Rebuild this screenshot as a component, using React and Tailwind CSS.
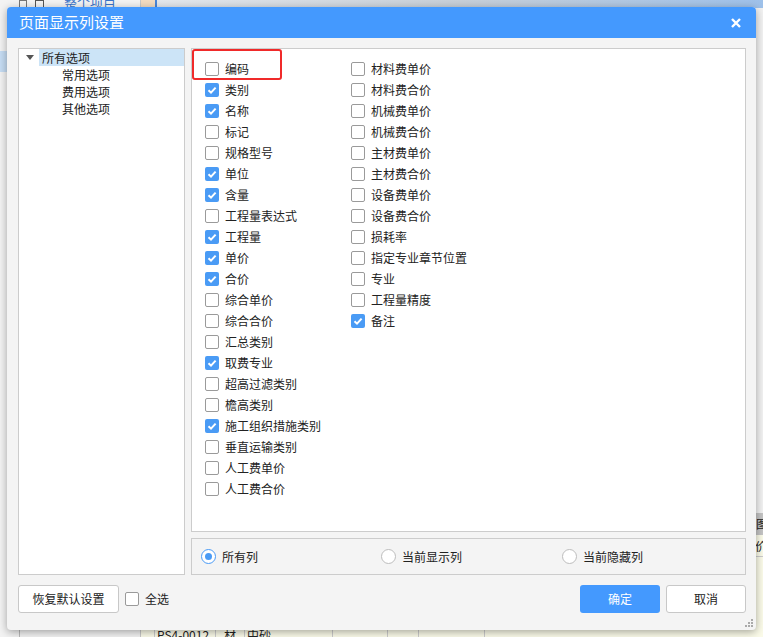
import React from "react";

const col1 = [
  ["编码", false],
  ["类别", true],
  ["名称", true],
  ["标记", false],
  ["规格型号", false],
  ["单位", true],
  ["含量", true],
  ["工程量表达式", false],
  ["工程量", true],
  ["单价", true],
  ["合价", true],
  ["综合单价", false],
  ["综合合价", false],
  ["汇总类别", false],
  ["取费专业", true],
  ["超高过滤类别", false],
  ["檐高类别", false],
  ["施工组织措施类别", true],
  ["垂直运输类别", false],
  ["人工费单价", false],
  ["人工费合价", false],
];

const col2 = [
  ["材料费单价", false],
  ["材料费合价", false],
  ["机械费单价", false],
  ["机械费合价", false],
  ["主材费单价", false],
  ["主材费合价", false],
  ["设备费单价", false],
  ["设备费合价", false],
  ["损耗率", false],
  ["指定专业章节位置", false],
  ["专业", false],
  ["工程量精度", false],
  ["备注", true],
];

function Box({ checked }) {
  if (checked) {
    return (
      <span className="flex h-[14px] w-[14px] shrink-0 items-center justify-center rounded-[2px] bg-[#4a9bf5]">
        <svg width="10" height="10" viewBox="0 0 10 10">
          <path d="M1.5 5.2 L4 7.6 L8.6 2.6" fill="none" stroke="#fff" strokeWidth="2" />
        </svg>
      </span>
    );
  }
  return <span className="h-[14px] w-[14px] shrink-0 rounded-[2px] border border-[#9a9a9a] bg-white" />;
}

function Item({ label, checked }) {
  return (
    <div className="flex h-[21px] items-center gap-[6px]">
      <Box checked={checked} />
      <span className="whitespace-nowrap">{label}</span>
    </div>
  );
}

function Radio({ on, label }) {
  return (
    <div className="flex items-center gap-[6px]">
      {on ? (
        <span className="flex h-[15px] w-[15px] items-center justify-center rounded-full border border-[#4a9bf5] bg-white">
          <span className="h-[7px] w-[7px] rounded-full bg-[#4a9bf5]" />
        </span>
      ) : (
        <span className="h-[15px] w-[15px] rounded-full border border-[#bdbdbd] bg-white" />
      )}
      <span>{label}</span>
    </div>
  );
}

export default function App() {
  return (
    <div
      className="relative h-[637px] w-[763px] overflow-hidden bg-[#f2f2f2] text-[12px] text-[#222]"
      style={{ fontFamily: '"Noto Sans CJK SC", "Noto Sans", sans-serif' }}
    >
      {/* background application */}
      <div className="flex h-full">
        <div className="flex w-[141px] flex-col border-r border-[#c9c9c9] bg-[#f3f3f3]">
          <div className="flex h-[8px] items-end pl-[19px] text-[13px] leading-none text-[#3a73c9]">
            <span className="h-[8px] w-[8px] border border-[#777]" />
            <span className="ml-[8px] h-[8px] w-[9px] border border-[#555]" />
            <span className="ml-[20px]">整个项目</span>
          </div>
          <div className="mt-[43px] h-[21px] w-[10px] bg-[#c6ddf4]" />
          <div className="flex-1" />
          <div className="ml-[19px] h-[8px] border-l border-[#bbb]" />
        </div>
        <div className="flex flex-1 flex-col">
          <div className="flex h-[8px]">
            <div className="w-[14px] bg-[#f3dcc1]" />
            <div className="w-[2px] bg-[#4a86d8]" />
            <div className="flex-1 bg-gradient-to-r from-[#e3e7ec] via-[#c7cfd8] to-[#9ec1ea]" />
          </div>
          <div className="flex flex-1 justify-end">
            <div className="mt-[505px] flex w-[8px] flex-col bg-[#fbfbe9]">
              <div className="h-[22px] bg-[#c4c4c4] pl-[1px] text-[12px] leading-[22px]">图</div>
              <div className="h-[22px] border-b border-[#ccc] text-[12px] leading-[22px]">价</div>
            </div>
          </div>
          <div className="flex h-[8px] bg-[#fbfbe9] text-[12px] leading-[12px]">
            <div className="w-[14px] border-r border-[#ccc]" />
            <div className="w-[61px] border-r border-[#ccc] pl-[2px]">PS4-0012</div>
            <div className="w-[29px] border-r border-[#ccc] text-center">材</div>
            <div className="w-[88px] border-r border-[#ccc] pl-[2px]">中砂</div>
            <div className="w-[55px] border-r border-[#ccc]" />
            <div className="w-[31px] border-r border-[#ccc]" />
            <div className="w-[66px] border-r border-[#ccc]" />
            <div className="flex-1" />
          </div>
        </div>
      </div>

      {/* dialog */}
      <div className="absolute left-[7px] top-[7px] flex h-[623px] w-[749px] flex-col rounded-[4px] bg-[#f4f4f4] shadow-[0_2px_8px_rgba(0,0,0,0.35)]">
        <div className="flex h-[31px] shrink-0 items-center justify-between rounded-t-[4px] bg-[#4499fe] pl-[12px] pr-[15px] text-[15px] text-white">
          <span>页面显示列设置</span>
          <svg width="10" height="10" viewBox="0 0 10 10">
            <path d="M1 1 L9 9 M9 1 L1 9" stroke="#fff" strokeWidth="2.4" />
          </svg>
        </div>

        <div className="flex flex-1 flex-col pl-[11px] pr-[10px] pt-[10px]">
          <div className="flex h-[527px] gap-[6px]">
            {/* tree */}
            <div className="w-[167px] border border-[#cccccc] bg-white">
              <div className="flex h-[17px] items-center">
                <span className="flex w-[20px] justify-center pl-[1px]">
                  <svg width="8" height="5" viewBox="0 0 8 5">
                    <path d="M0 0 H8 L4 5 Z" fill="#555" />
                  </svg>
                </span>
                <span className="flex h-[17px] flex-1 items-center bg-[#cce4f7] pl-[3px]">所有选项</span>
              </div>
              <div className="flex h-[17px] items-center pl-[43px]">常用选项</div>
              <div className="flex h-[17px] items-center pl-[43px]">费用选项</div>
              <div className="flex h-[17px] items-center pl-[43px]">其他选项</div>
            </div>

            {/* right */}
            <div className="flex flex-1 flex-col gap-[6px]">
              <div className="relative h-[485px] border border-[#cccccc] bg-white pl-[13px] pt-[9px]">
                <div className="absolute left-0 top-0 h-[31px] w-[90px] rounded-[3px] border-2 border-[#f02a2a]" />
                <div className="flex">
                  <div className="w-[146px]">
                    {col1.map(([l, c]) => (
                      <Item key={l} label={l} checked={c} />
                    ))}
                  </div>
                  <div>
                    {col2.map(([l, c]) => (
                      <Item key={l} label={l} checked={c} />
                    ))}
                  </div>
                </div>
              </div>
              <div className="flex h-[37px] items-center border border-[#cccccc] bg-[#f4f4f4] pl-[9px]">
                <div className="w-[180px]">
                  <Radio on label="所有列" />
                </div>
                <div className="w-[181px]">
                  <Radio label="当前显示列" />
                </div>
                <Radio label="当前隐藏列" />
              </div>
            </div>
          </div>

          <div className="mt-[10px] flex items-center">
            <button className="h-[28px] w-[101px] rounded-[3px] border border-[#c8c8c8] bg-white text-[12px]">
              恢复默认设置
            </button>
            <div className="ml-[6px] flex items-center gap-[6px]">
              <Box checked={false} />
              <span>全选</span>
            </div>
            <div className="flex-1" />
            <button className="h-[28px] w-[80px] rounded-[3px] bg-[#4499fe] text-[12px] text-white">确定</button>
            <button className="ml-[6px] h-[28px] w-[80px] rounded-[3px] border border-[#c8c8c8] bg-white text-[12px]">
              取消
            </button>
          </div>
        </div>

        <div className="absolute bottom-[3px] right-[3px] grid grid-cols-3 gap-[1px]">
          {[0, 0, 1, 0, 1, 1, 1, 1, 1].map((v, i) => (
            <span key={i} className={v ? "h-[2px] w-[2px] bg-[#aaa]" : "h-[2px] w-[2px]"} />
          ))}
        </div>
      </div>
    </div>
  );
}
